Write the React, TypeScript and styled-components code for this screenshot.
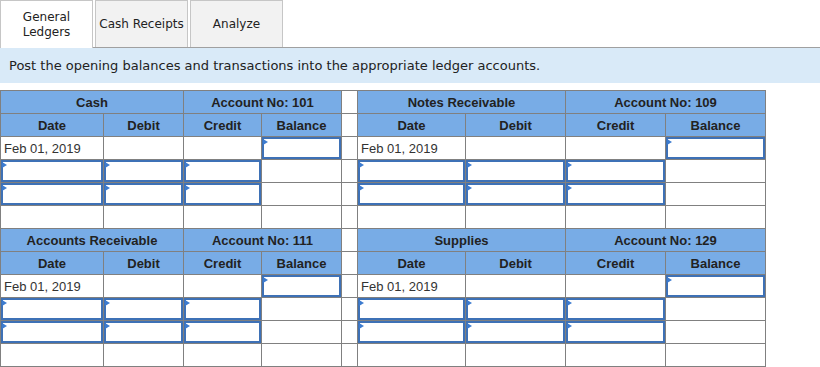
import React from "react";
import styled, { createGlobalStyle } from "styled-components";

interface Ledger {
  title: string;
  accountNo: string;
}

const sections: [Ledger, Ledger][] = [
  [
    { title: "Cash", accountNo: "101" },
    { title: "Notes Receivable", accountNo: "109" },
  ],
  [
    { title: "Accounts Receivable", accountNo: "111" },
    { title: "Supplies", accountNo: "129" },
  ],
];

const columnWidths = [103, 80, 78, 80, 16, 108, 100, 100, 100];
const subHeaders = ["Date", "Debit", "Credit", "Balance"];

const App: React.FC = () => {
  const renderOpeningRow = () => (
    <>
      <TextCell>Feb 01, 2019</TextCell>
      <BodyCell />
      <BodyCell />
      <InputCell>
        <EntryField />
      </InputCell>
    </>
  );

  const renderEntryRow = () => (
    <>
      <InputCell>
        <EntryField />
      </InputCell>
      <InputCell>
        <EntryField />
      </InputCell>
      <InputCell>
        <EntryField />
      </InputCell>
      <BodyCell />
    </>
  );

  const renderEmptyRow = () => (
    <>
      <BodyCell />
      <BodyCell />
      <BodyCell />
      <BodyCell />
    </>
  );

  return (
    <>
      <GlobalStyle />
      <TabBar>
        <Tab $active>General Ledgers</Tab>
        <Tab>Cash Receipts</Tab>
        <Tab>Analyze</Tab>
      </TabBar>
      <Instructions>
        Post the opening balances and transactions into the appropriate ledger
        accounts.
      </Instructions>
      <LedgerTable>
        <colgroup>
          {columnWidths.map((w, i) => (
            <Col key={i} $width={w} />
          ))}
        </colgroup>
        <tbody>
          {sections.map(([left, right], si) => (
            <React.Fragment key={si}>
              <Row>
                <HeadCell colSpan={2}>{left.title}</HeadCell>
                <HeadCell colSpan={2}>Account No: {left.accountNo}</HeadCell>
                <SpacerCell />
                <HeadCell colSpan={2}>{right.title}</HeadCell>
                <HeadCell colSpan={2}>Account No: {right.accountNo}</HeadCell>
              </Row>
              <Row>
                {subHeaders.map((h) => (
                  <HeadCell key={`l-${h}`}>{h}</HeadCell>
                ))}
                <SpacerCell />
                {subHeaders.map((h) => (
                  <HeadCell key={`r-${h}`}>{h}</HeadCell>
                ))}
              </Row>
              <Row>
                {renderOpeningRow()}
                <SpacerCell />
                {renderOpeningRow()}
              </Row>
              {[0, 1].map((r) => (
                <Row key={r}>
                  {renderEntryRow()}
                  <SpacerCell />
                  {renderEntryRow()}
                </Row>
              ))}
              <Row>
                {renderEmptyRow()}
                <SpacerCell />
                {renderEmptyRow()}
              </Row>
            </React.Fragment>
          ))}
        </tbody>
      </LedgerTable>
    </>
  );
};

const EntryField: React.FC = () => (
  <FieldWrap>
    <Flag />
    <FieldInput type="text" />
  </FieldWrap>
);

const GlobalStyle = createGlobalStyle`
  html, body {
    margin: 0;
    padding: 0;
    background: #ffffff;
  }
  body {
    font-family: "DejaVu Sans", Verdana, sans-serif;
    color: #222222;
  }
`;

const TabBar = styled.div`
  display: flex;
  align-items: flex-start;
  gap: 2px;
  height: 48px;
  box-sizing: border-box;
  border-bottom: 1px solid #a0a0a0;
`;

const Tab = styled.div<{ $active?: boolean }>`
  width: 93px;
  height: ${({ $active }) => ($active ? "48px" : "47px")};
  box-sizing: border-box;
  border: 1px solid #c6c6c6;
  border-bottom: none;
  background: ${({ $active }) => ($active ? "#ffffff" : "#f2f2f2")};
  display: flex;
  align-items: center;
  justify-content: center;
  text-align: center;
  padding: 1px 2px 0;
  font-size: 12px;
  line-height: 15px;
  color: #222222;
`;

const Instructions = styled.div`
  height: 35px;
  display: flex;
  align-items: center;
  padding-left: 9px;
  background: #d9eaf8;
  font-size: 13px;
  color: #222222;
`;

const LedgerTable = styled.table`
  margin-top: 7px;
  border-collapse: collapse;
  table-layout: fixed;
  width: 766px;
  font-family: "Liberation Sans", Arial, sans-serif;
  font-size: 13px;
  line-height: 15px;
`;

const Col = styled.col<{ $width: number }>`
  width: ${({ $width }) => $width}px;
`;

const Row = styled.tr`
  height: 23px;
`;

const BodyCell = styled.td`
  padding: 0;
  border: 1px solid #808080;
  background: #ffffff;
  vertical-align: middle;
`;

const HeadCell = styled(BodyCell)`
  background: #78ace6;
  font-weight: bold;
  text-align: center;
  color: #222222;
`;

const SpacerCell = styled(BodyCell)``;

const TextCell = styled(BodyCell)`
  padding-left: 3px;
  color: #333333;
  white-space: nowrap;
`;

const InputCell = styled(BodyCell)`
  position: relative;
`;

const FieldWrap = styled.div`
  position: relative;
  height: 22px;
`;

const FieldInput = styled.input`
  display: block;
  width: 100%;
  height: 22px;
  box-sizing: border-box;
  margin: 0;
  padding: 0 4px;
  border: 2px solid #3e71b6;
  background: #ffffff;
  outline: none;
`;

const Flag = styled.span`
  position: absolute;
  top: 2px;
  left: 1px;
  width: 0;
  height: 0;
  border-top: 3px solid transparent;
  border-bottom: 3px solid transparent;
  border-left: 5px solid #3c7bcf;
`;

export default App;
